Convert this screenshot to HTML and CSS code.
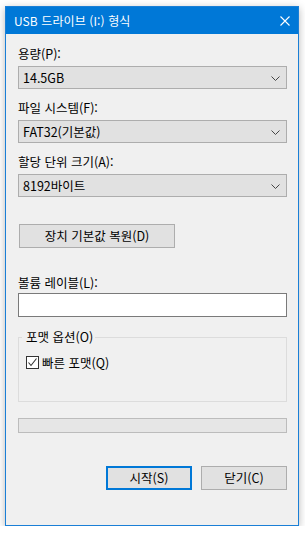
FILE: index.html
```html
<!doctype html>
<html lang="ko">
<head>
<meta charset="utf-8">
<title>USB 드라이브 (I:) 형식</title>
<link rel="stylesheet" href="styles.css">
</head>
<body>
<div class="window">
	<div class="titlebar">
		<span class="title">USB 드라이브 (I:) 형식</span>
		<svg class="close" width="10" height="10" viewBox="0 0 10 10"><path d="M0.5 0.5L9.5 9.5M9.5 0.5L0.5 9.5" stroke="#fff" stroke-width="1.1" fill="none"/></svg>
	</div>
	<div class="content">
		<div class="field-label first">용량(P):</div>
		<div class="combo"><span>14.5GB</span><svg class="chevron" width="9" height="5" viewBox="0 0 9 5"><path d="M0.5 0.5L4.5 4.5L8.5 0.5" stroke="#444" fill="none"/></svg></div>

		<div class="field-label">파일 시스템(F):</div>
		<div class="combo"><span>FAT32(기본값)</span><svg class="chevron" width="9" height="5" viewBox="0 0 9 5"><path d="M0.5 0.5L4.5 4.5L8.5 0.5" stroke="#444" fill="none"/></svg></div>

		<div class="field-label">할당 단위 크기(A):</div>
		<div class="combo"><span>8192바이트</span><svg class="chevron" width="9" height="5" viewBox="0 0 9 5"><path d="M0.5 0.5L4.5 4.5L8.5 0.5" stroke="#444" fill="none"/></svg></div>

		<button class="btn restore">장치 기본값 복원(D)</button>

		<div class="field-label spaced">볼륨 레이블(L):</div>
		<div class="textbox"></div>

		<fieldset class="group">
			<legend>포맷 옵션(O)</legend>
			<div class="group-body">
				<span class="checkbox"><svg width="11" height="11" viewBox="0 0 11 11"><path d="M1.5 5.5L4 8.5L9.5 1.5" stroke="#333" stroke-width="1.1" fill="none"/></svg></span>
				<span class="check-label">빠른 포맷(Q)</span>
			</div>
		</fieldset>

		<div class="progress"></div>

		<div class="actions">
			<button class="btn primary">시작(S)</button>
			<button class="btn">닫기(C)</button>
		</div>
	</div>
</div>
</body>
</html>
```
FILE: styles.css
```css
html, body {
	margin: 0;
	background: #ffffff;
}
body {
	padding: 6px 6px 0 5px;
	font-family: "Noto Sans CJK KR", "Noto Sans", sans-serif;
	font-size: 12px;
	color: #000;
}
.window {
	width: 294px;
	height: 520px;
	box-sizing: border-box;
	border: 1px solid #1a7fd6;
	background: #f0f0f0;
	box-shadow: 0 2px 8px rgba(0, 0, 0, 0.28);
	display: flex;
	flex-direction: column;
}
.titlebar {
	height: 27px;
	background: #0078d7;
	display: flex;
	align-items: center;
	justify-content: space-between;
	padding: 0 8px 0 8px;
	color: #fff;
}
.title {
	line-height: 16px;
	letter-spacing: 0.1px;
}
.content {
	padding: 12px 11px 0 12px;
	display: flex;
	flex-direction: column;
	font-size: 12.5px;
}
.field-label {
	line-height: 16px;
	height: 16px;
	margin-top: 11px;
}
.field-label.first {
	margin-top: 0;
}
.field-label.spaced {
	margin-top: 27px;
}
.combo {
	margin-top: 4px;
	height: 23px;
	box-sizing: border-box;
	border: 1px solid #adadad;
	background: #e1e1e1;
	display: flex;
	align-items: center;
	justify-content: space-between;
	padding: 0 6px 0 4px;
	line-height: 16px;
}
.chevron {
	margin-top: 1px;
}
.btn {
	font-family: inherit;
	font-size: 12.5px;
	color: #000;
	height: 24px;
	box-sizing: border-box;
	border: 1px solid #adadad;
	background: #e1e1e1;
	padding: 0;
	line-height: 16px;
}
.restore {
	margin-top: 27px;
	margin-left: 1px;
	width: 156px;
	align-self: flex-start;
}
.textbox {
	margin-top: 2px;
	height: 24px;
	box-sizing: border-box;
	border: 1px solid #7a7a7a;
	background: #fff;
}
.group {
	margin: 12px 0 0 0;
	padding: 0;
	border: 1px solid #dcdcdc;
	min-inline-size: 0;
}
.group legend {
	margin-left: 3px;
	padding: 0 2px 0 4px;
	line-height: 16px;
}
.group-body {
	height: 56px;
	box-sizing: border-box;
	padding: 10px 0 0 7px;
	display: flex;
	align-items: flex-start;
}
.checkbox {
	width: 13px;
	height: 13px;
	box-sizing: border-box;
	border: 1px solid #333;
	background: #fff;
	display: flex;
	align-items: center;
	justify-content: center;
	margin-top: 1px;
}
.check-label {
	margin-left: 3px;
	line-height: 16px;
}
.progress {
	margin-top: 16px;
	height: 15px;
	box-sizing: border-box;
	border: 1px solid #bcbcbc;
	background: #e6e6e6;
}
.actions {
	margin-top: 33px;
	display: flex;
	justify-content: flex-end;
	gap: 9px;
}
.actions .btn {
	width: 86px;
}
.btn.primary {
	border: 2px solid #0078d7;
}
```
